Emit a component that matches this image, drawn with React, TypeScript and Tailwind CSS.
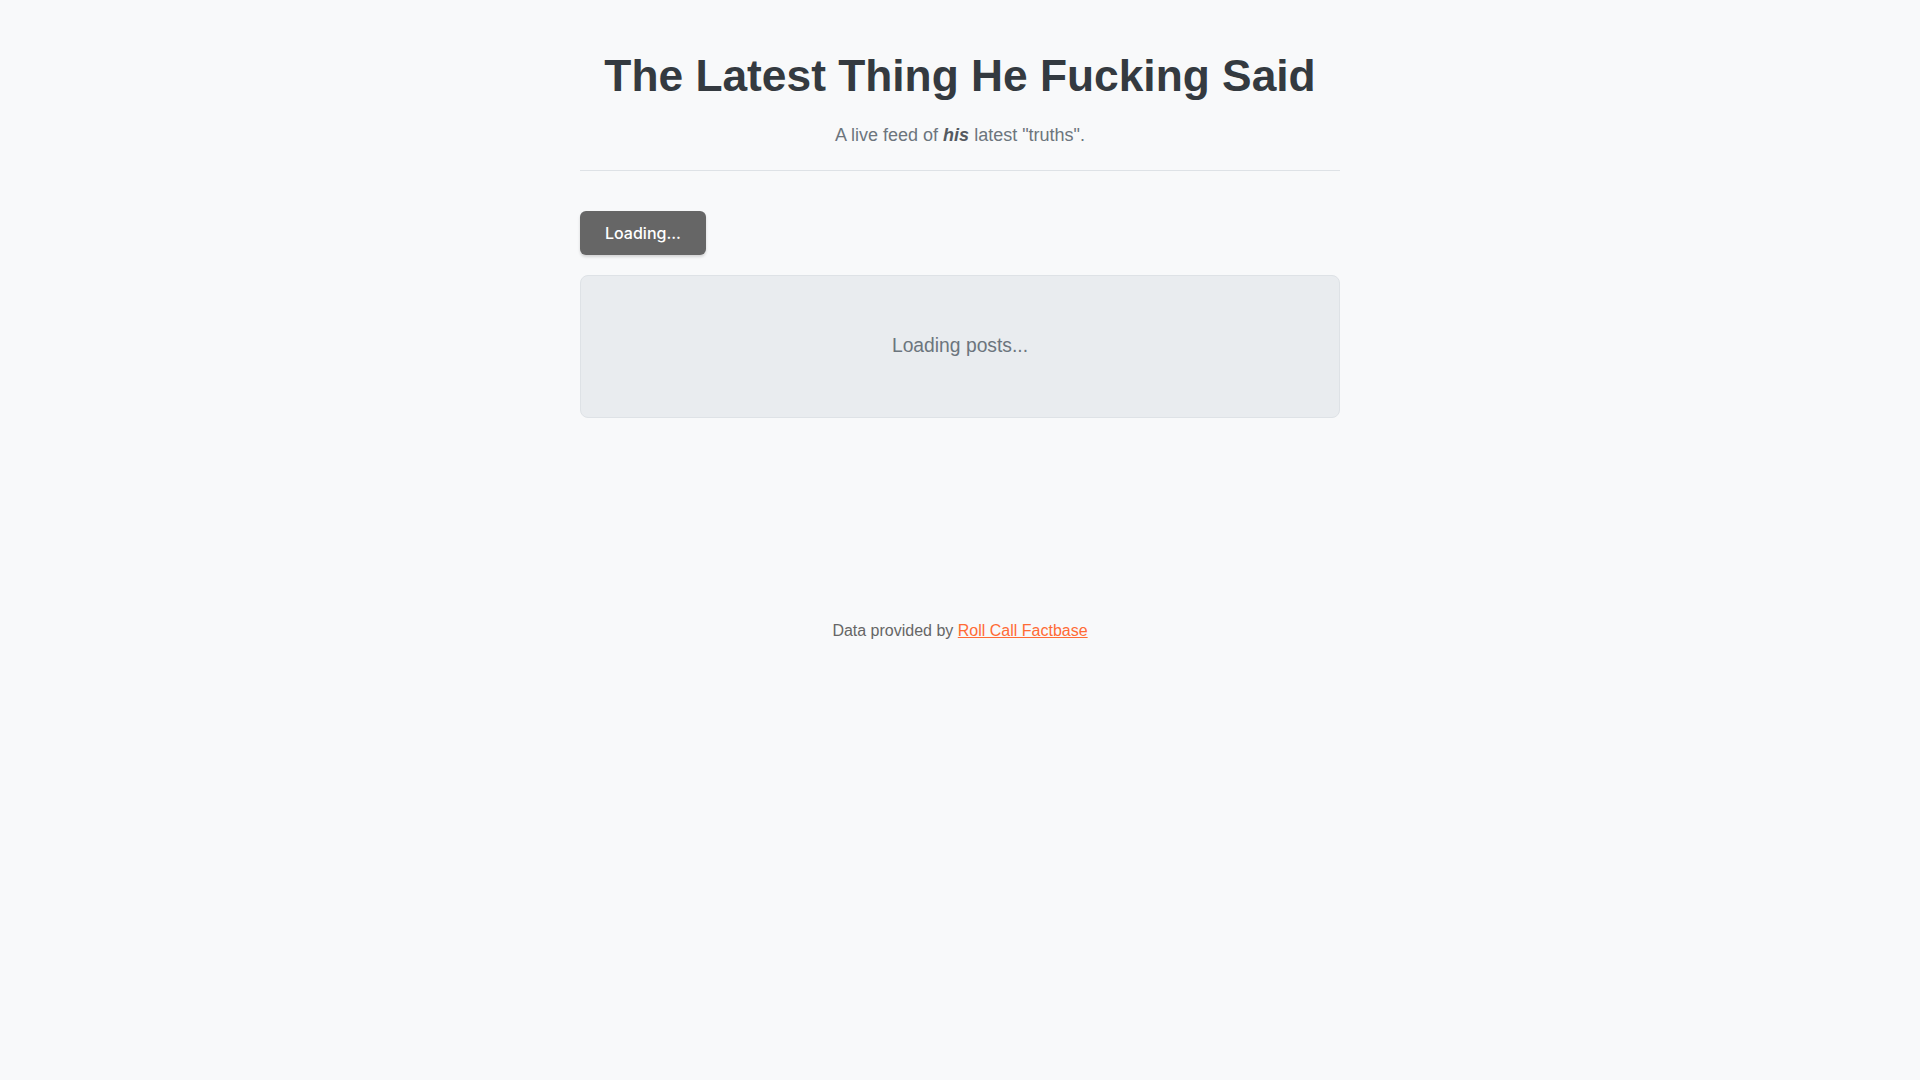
import React from "react";

export default function App() {
  return (
    <div className="min-h-screen bg-[#f8f9fa] font-['Liberation_Sans',Arial,sans-serif]">
      <div className="mx-auto w-[760px] pt-[49px]">
        <header className="text-center">
          <h1 className="text-[44.3px] leading-[53px] font-bold text-[#343a40]">
            The Latest Thing He Fucking Said
          </h1>
          <p className="mt-[20px] text-[18px] leading-[27px] text-[#6c757d]">
            A live feed of <em className="font-bold italic text-[#555a60]">his</em> latest "truths".
          </p>
        </header>
        <hr className="mt-[21px] border-0 border-t border-[#dee2e6]" />
        <div className="mt-[40px]">
          <button className="h-[44px] rounded-[6px] bg-[#666666] px-[25px] font-['Inter',sans-serif] text-[16px] font-medium text-white shadow-[0_2px_3px_rgba(0,0,0,0.15)]">
            Loading...
          </button>
        </div>
        <div className="mt-[20px] flex h-[143px] items-center justify-center rounded-[8px] border border-[#dee2e6] bg-[#e9ecef]">
          <p className="text-[19.3px] text-[#6c757d]">Loading posts...</p>
        </div>
        <footer className="mt-[201px] text-center text-[16px] leading-[24px] text-[#666666]">
          Data provided by{" "}
          <a href="#" className="text-[#ff6b35] underline">
            Roll Call Factbase
          </a>
        </footer>
      </div>
    </div>
  );
}
